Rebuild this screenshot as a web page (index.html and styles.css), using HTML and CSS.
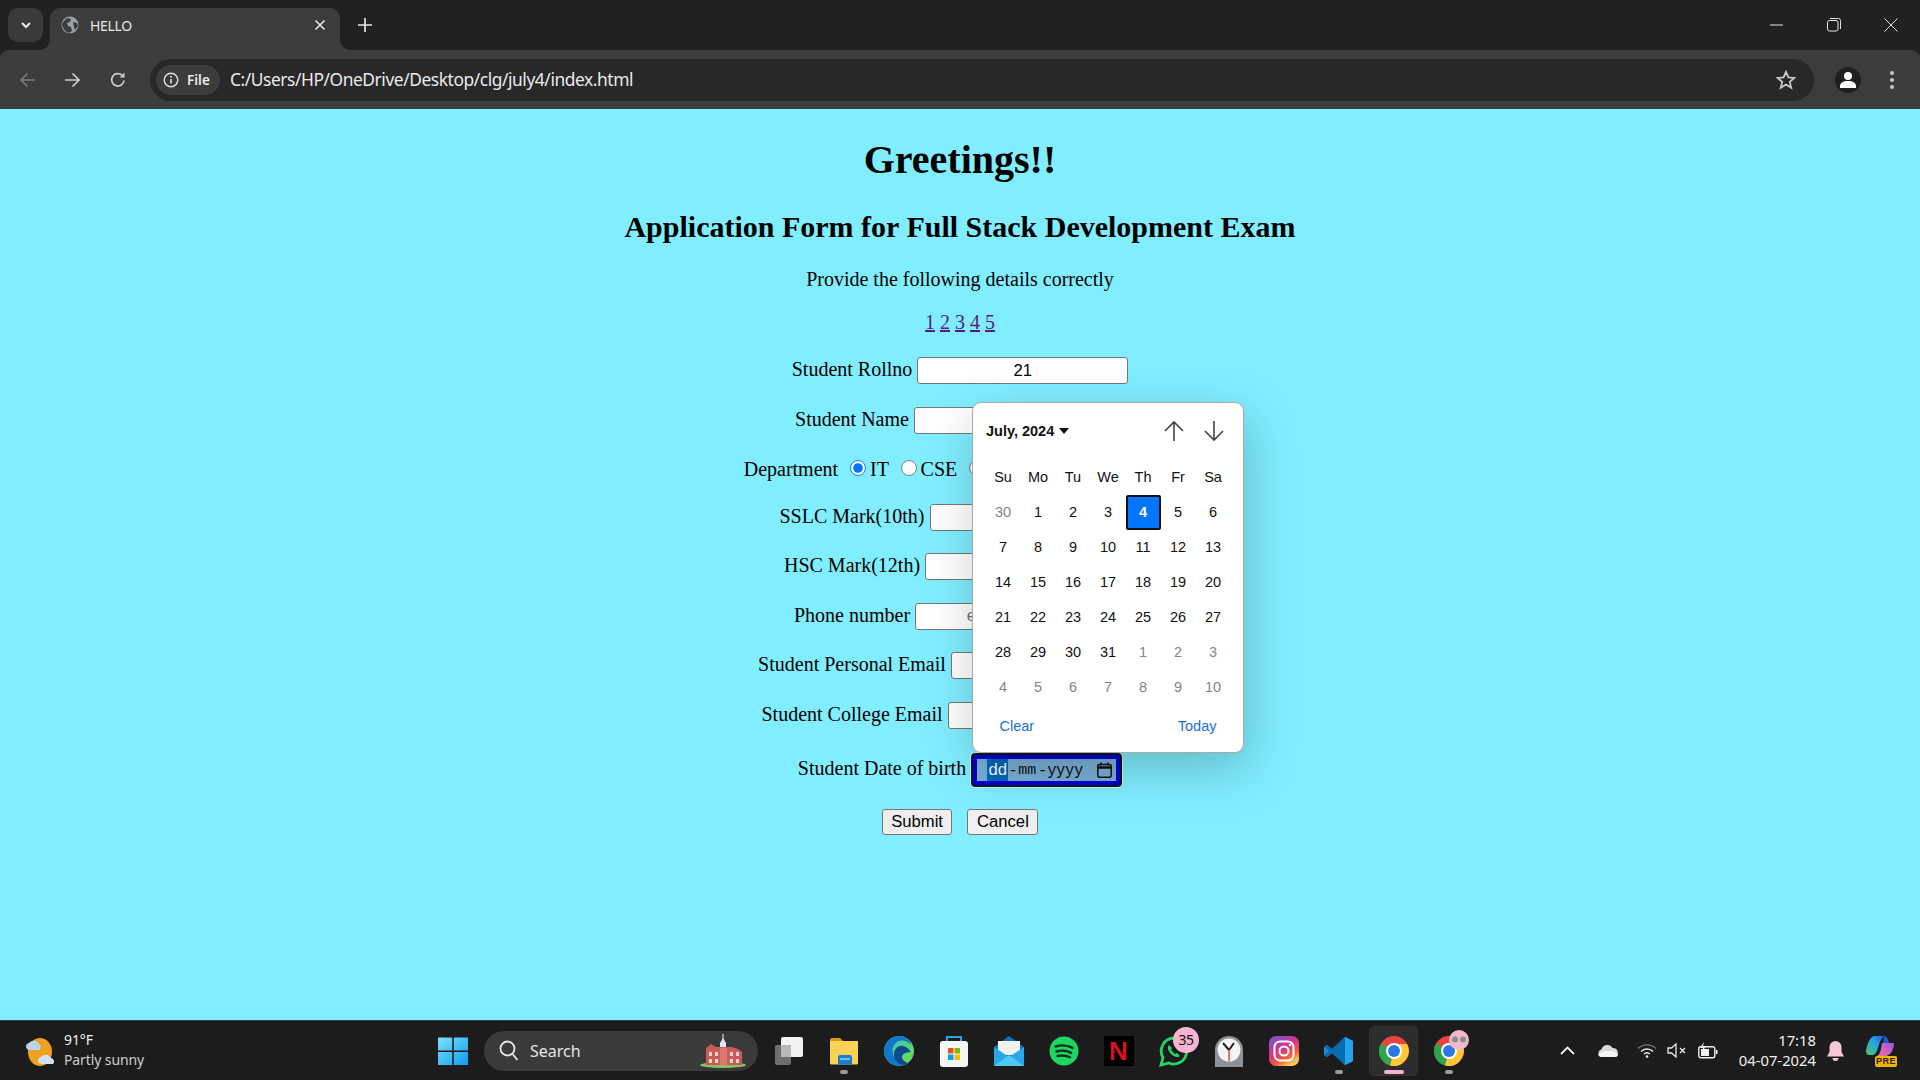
FILE: index.html
```html
<!DOCTYPE html>
<html lang="en">
<head>
<meta charset="utf-8">
<title>HELLO</title>
<link rel="stylesheet" href="styles.css">
</head>
<body>
<div class="tabstrip">
  <div class="tabsearch"><svg width="14" height="14" viewBox="0 0 14 14"><path d="M3 5l4 4 4-4" fill="none" stroke="#e8e8e8" stroke-width="2"/></svg></div>
  <div class="tab">
    <svg class="globe" width="18" height="18" viewBox="0 0 18 18"><circle cx="9" cy="9" r="8.5" fill="#9aa0a6"/><path d="M2 6l4-4 4 1-1 3-3 1 1 3 3 1 1 4-3 2C5 16 2 13 1 9z M12 6l4 1 1 3-3 4-1-3z" fill="#3c3c3c"/></svg>
    <span class="tabtitle">HELLO</span>
    <svg class="tabclose" width="12" height="12" viewBox="0 0 12 12"><path d="M1.5 1.5l9 9M10.5 1.5l-9 9" stroke="#e8e8e8" stroke-width="1.6"/></svg>
  </div>
  <svg class="newtab" width="14" height="14" viewBox="0 0 14 14"><path d="M7 0v14M0 7h14" stroke="#e3e3e3" stroke-width="1.7"/></svg>
  <div class="winctrls">
    <svg width="14" height="14" viewBox="0 0 14 14"><path d="M0 7h13" stroke="#e3e3e3" stroke-width="1"/></svg>
    <svg width="14" height="14" viewBox="0 0 14 14"><rect x=".5" y="2.5" width="10.5" height="10.5" rx="2" fill="none" stroke="#e3e3e3"/><path d="M3 .5h8.5a2 2 0 0 1 2 2V11" fill="none" stroke="#e3e3e3"/></svg>
    <svg width="14" height="14" viewBox="0 0 14 14"><path d="M.5.5l13 13M13.5.5l-13 13" stroke="#e3e3e3" stroke-width="1"/></svg>
  </div>
</div>
<div class="toolbar">
  <svg class="navicon" width="18" height="18" viewBox="0 0 18 18"><path d="M16 9H2M8.500 2.500L2 9l6.500 6.500" fill="none" stroke="#797979" stroke-width="1.7"/></svg>
  <svg class="navicon" width="18" height="18" viewBox="0 0 18 18"><path d="M2 9h14M9.500 2.500L16 9l-6.500 6.500" fill="none" stroke="#d0d0d0" stroke-width="1.7"/></svg>
  <svg class="navicon" width="18" height="18" viewBox="0 0 18 18"><path d="M15 9.500A6.200 6.200 0 1 1 13 4.200" fill="none" stroke="#d0d0d0" stroke-width="1.700"/><path d="M15.500 1.500v5h-5z" fill="#d0d0d0"/></svg>
  <div class="omnibox">
    <div class="chip">
      <svg width="16" height="16" viewBox="0 0 16 16"><circle cx="8" cy="8" r="6.800" fill="none" stroke="#e3e3e3" stroke-width="1.400"/><path d="M8 7v4.500" stroke="#e3e3e3" stroke-width="1.600"/><circle cx="8" cy="4.800" r="1" fill="#e3e3e3"/></svg>
      <span class="chiptext">File</span>
    </div>
    <span class="url">C:/Users/HP/OneDrive/Desktop/clg/july4/index.html</span>
    <svg class="star" width="20" height="20" viewBox="0 0 20 20"><path d="M10 1.800l2.400 5.600 6 .5-4.600 4 1.400 5.900-5.200-3.200-5.200 3.200 1.400-5.900-4.600-4 6-.5z" fill="none" stroke="#c8c8c8" stroke-width="1.800"/></svg>
  </div>
  <div class="avatar"><svg width="20" height="20" viewBox="0 0 20 20"><circle cx="10" cy="6" r="4" fill="#fff"/><path d="M2 18v-2c0-3 3-5 8-5s8 2 8 5v2z" fill="#fff"/></svg></div>
  <svg class="dots" width="6" height="20" viewBox="0 0 6 20"><circle cx="3" cy="3" r="2" fill="#c8c8c8"/><circle cx="3" cy="10" r="2" fill="#c8c8c8"/><circle cx="3" cy="17" r="2" fill="#c8c8c8"/></svg>
</div>

<main class="page">
  <h1>Greetings!!</h1>
  <h2>Application Form for Full Stack Development Exam</h2>
  <p class="line">Provide the following details correctly</p>
  <p class="line"><a href="#a">1</a> <a href="#b">2</a> <a href="#c">3</a> <a href="#d">4</a> <a href="#e">5</a></p>
  <form class="form">
    <p class="row">Student Rollno <input class="field" type="text" value="21"></p>
    <p class="row">Student Name <input class="field" type="text"></p>
    <p class="row deptrow">Department &nbsp;<input class="radio" type="radio" name="d" checked> IT &nbsp;<input class="radio" type="radio" name="d"> CSE &nbsp;<input class="radio" type="radio" name="d"><span class="deptgap"></span></p>
    <p class="row">SSLC Mark(10th) <input class="field" type="text"></p>
    <p class="row">HSC Mark(12th) <input class="field" type="text"></p>
    <p class="row">Phone number <input class="field" type="text" placeholder="enter numbers"></p>
    <p class="row">Student Personal Email <input class="field" type="text"></p>
    <p class="row">Student College Email <input class="field" type="text"></p>
    <p class="row daterow">Student Date of birth <span class="datefield"><span class="dateinner"><span class="dd">dd</span><span class="sep">-</span><span class="mm">mm</span><span class="sep">-</span><span class="yy">yyyy</span><svg class="calicon" width="15" height="16" viewBox="0 0 15 16"><rect x=".8" y="2.500" width="13.400" height="12.700" rx="1.500" fill="none" stroke="#111" stroke-width="1.500"/><path d="M1 5.500h13" stroke="#111" stroke-width="2.500"/><path d="M4 .5v3M11 .5v3" stroke="#111" stroke-width="1.500"/></svg></span></span></p>
    <div class="buttons"><button type="button" class="btn">Submit</button><button type="button" class="btn">Cancel</button></div>
  </form>

  <div class="picker">
    <div class="pickhead">
      <span class="month">July, 2024 <svg width="10" height="6" viewBox="0 0 10 6"><path d="M0 0h10L5 6z" fill="#111"/></svg></span>
      <span class="arrows">
        <svg width="20" height="22" viewBox="0 0 20 22"><path d="M10 21V2M1 11l9-9 9 9" fill="none" stroke="#444" stroke-width="1.600"/></svg>
        <svg width="20" height="22" viewBox="0 0 20 22"><path d="M10 1v19M1 11l9 9 9-9" fill="none" stroke="#444" stroke-width="1.600"/></svg>
      </span>
    </div>
    <div class="grid">
      <span>Su</span><span>Mo</span><span>Tu</span><span>We</span><span>Th</span><span>Fr</span><span>Sa</span>
      <span class="off">30</span><span>1</span><span>2</span><span>3</span><span class="sel">4</span><span>5</span><span>6</span>
      <span>7</span><span>8</span><span>9</span><span>10</span><span>11</span><span>12</span><span>13</span>
      <span>14</span><span>15</span><span>16</span><span>17</span><span>18</span><span>19</span><span>20</span>
      <span>21</span><span>22</span><span>23</span><span>24</span><span>25</span><span>26</span><span>27</span>
      <span>28</span><span>29</span><span>30</span><span>31</span><span class="off">1</span><span class="off">2</span><span class="off">3</span>
      <span class="off">4</span><span class="off">5</span><span class="off">6</span><span class="off">7</span><span class="off">8</span><span class="off">9</span><span class="off">10</span>
    </div>
    <div class="pickfoot"><span>Clear</span><span>Today</span></div>
  </div>
</main>

<footer class="taskbar">
  <div class="weather">
    <svg width="34" height="34" viewBox="0 0 34 34"><ellipse cx="17" cy="18" rx="12" ry="14" fill="#f0a020"/><path d="M3 13a4 4 0 0 1 3-4 6 6 0 0 1 10 1 3.500 3.500 0 0 1 0 6H6a3.500 3.500 0 0 1-3-3z" fill="#b9d4f2"/><path d="M15 27a4 4 0 0 1 3-4 6 6 0 0 1 10 1 3.500 3.500 0 0 1 2 6H18a3.500 3.500 0 0 1-3-3z" fill="#cfe2f7"/></svg>
    <div class="wtext"><div class="temp">91°F</div><div class="cond">Partly sunny</div></div>
  </div>
  <div class="center">
    <svg class="winlogo" width="30" height="30" viewBox="0 0 30 30"><defs><linearGradient id="w" x1="0" y1="0" x2="1" y2="1"><stop offset="0" stop-color="#7de0fb"/><stop offset="1" stop-color="#0f9cf0"/></linearGradient></defs><path d="M0 1.500h14.200v13H0zM15.800 1.500H30v13H15.800zM0 16h14.200v13H0zM15.800 16H30v13H15.800z" fill="url(#w)"/></svg>
    <div class="search">
      <svg width="20" height="22" viewBox="0 0 20 22"><circle cx="8.500" cy="8.500" r="7" fill="none" stroke="#e8e8e8" stroke-width="1.800"/><path d="M13.500 14l5 6" stroke="#e8e8e8" stroke-width="1.800"/></svg>
      <span class="searchtext">Search</span>
      <svg class="building" width="46" height="34" viewBox="0 0 46 34"><ellipse cx="23" cy="31" rx="23" ry="3" fill="#8ec060"/><path d="M22.500 0h1v8h-1z" fill="#e8e8f4"/><path d="M20 9l3-5 3 5v5h-6z" fill="#e4e6f5"/><path d="M6 14l5-4 5 3h16l6 2 4 3v13H6z" fill="#c95a55"/><path d="M20 14h7v17h-7z" fill="#d97a70"/><path d="M9 18h3v4H9zM15 18h3v4h-3zM30 18h3v4h-3zM36 18h3v4h-3zM9 25h3v4H9zM15 25h3v4h-3zM30 25h3v4h-3zM36 25h3v4h-3z" fill="#f1d5d0"/></svg>
    </div>
    <div class="apps">
      <div class="app"><svg width="28" height="30" viewBox="0 0 28 30"><rect x="6" y="1" width="22" height="20" rx="2" fill="#f2f2f2"/><rect x="0" y="9" width="16" height="20" rx="2" fill="#6e6e6e"/><rect x="6" y="9" width="10" height="12" fill="#b8b8b8"/></svg></div>
      <div class="app on"><svg width="32" height="32" viewBox="0 0 32 32"><path d="M2 5a2 2 0 0 1 2-2h8l3 3h-13z" fill="#d99a14"/><path d="M2 6h28v22a1.500 1.500 0 0 1-1.500 1.500h-25A1.500 1.500 0 0 1 2 28z" fill="#fcd256"/><path d="M10 22a2 2 0 0 1 2-2h10a2 2 0 0 1 2 2v7.500H10z" fill="#1b7ecb"/><path d="M12 24h10" stroke="#8fd0f8" stroke-width="1.500"/></svg></div>
      <div class="app"><svg width="32" height="32" viewBox="0 0 32 32"><defs><linearGradient id="e" x1="0" y1="0" x2="1" y2="1"><stop offset="0" stop-color="#2fb8d0"/><stop offset=".7" stop-color="#5fd868"/></linearGradient></defs><circle cx="16" cy="16" r="15" fill="url(#e)"/><path d="M1 16C1 8 8 1 16 1c7 0 11 4 12 9-3-4-9-6-14-3C9 10 8 17 12 23c3 4 8 6 13 5-3 2-6 3-9 3C8 31 1 24 1 16z" fill="#1278cc"/><path d="M11 20c0-6 4-10 9-9 4 1 6 3 8 6-3 0-9 1-9 5 0 3 3 5 6 6-3 2-7 2-10 0-2-2-4-5-4-8z" fill="#0c4a8e"/></svg></div>
      <div class="app"><svg width="30" height="34" viewBox="0 0 30 34"><path d="M8 8V3h14v5" fill="none" stroke="#22a8e8" stroke-width="2"/><rect x="1" y="7" width="28" height="26" rx="3" fill="#f6f6f6"/><rect x="9" y="14" width="5.500" height="5.500" fill="#ef4f24"/><rect x="15.500" y="14" width="5.500" height="5.500" fill="#7fbb00"/><rect x="9" y="20.500" width="5.500" height="5.500" fill="#00a3ee"/><rect x="15.500" y="20.500" width="5.500" height="5.500" fill="#ffb800"/></svg></div>
      <div class="app"><svg width="32" height="32" viewBox="0 0 32 32"><path d="M1 12L16 1l15 11v18a1 1 0 0 1-1 1H2a1 1 0 0 1-1-1z" fill="#0a73c8"/><path d="M5 6h22v14H5z" fill="#f2f2f2"/><path d="M1 12l15 10 15-10v18a1 1 0 0 1-1 1H2a1 1 0 0 1-1-1z" fill="#28a8ea"/><path d="M1 31L16 20l15 11z" fill="#50c8f4"/></svg></div>
      <div class="app"><svg width="30" height="30" viewBox="0 0 30 30"><circle cx="15" cy="15" r="14.500" fill="#1ed760"/><path d="M6.500 10.500c6-1.800 12-1.400 17 1.400M7.500 15.500c5-1.400 10.500-1 14.500 1.400M8.500 20c4.400-1 8.500-.8 12.500 1.200" fill="none" stroke="#14301e" stroke-width="2.400" stroke-linecap="round"/></svg></div>
      <div class="app"><span class="netflix">N</span></div>
      <div class="app"><svg width="32" height="32" viewBox="0 0 32 32"><path d="M16 3a13 13 0 0 0-11 19.500L3 30l7.700-2A13 13 0 1 0 16 3z" fill="none" stroke="#25d366" stroke-width="2.800"/><path d="M11 10c-2 2-1 6 2 9s7 4 9 2l-3-3-2 1-4-4 1-2z" fill="#25d366"/></svg><span class="badge">35</span></div>
      <div class="app"><svg width="30" height="34" viewBox="0 0 30 34"><path d="M21 3l5 4-2 2z" fill="#555"/><path d="M1 16a14 14 0 0 1 28 0v17H1z" fill="#8b9298"/><circle cx="15" cy="16" r="11.500" fill="#f4f4f4"/><path d="M15 16L9 9M15 16l5-7" stroke="#222" stroke-width="2"/><path d="M15 16v11" stroke="#d85030" stroke-width="1.500"/></svg></div>
      <div class="app"><svg width="30" height="30" viewBox="0 0 30 30"><defs><linearGradient id="i" x1="0" y1="0" x2=".6" y2="1"><stop offset="0" stop-color="#6a5ad8"/><stop offset=".5" stop-color="#d8308c"/><stop offset=".8" stop-color="#f0603c"/><stop offset="1" stop-color="#fcc850"/></linearGradient></defs><rect width="30" height="30" rx="7" fill="url(#i)"/><rect x="5.500" y="5.500" width="19" height="19" rx="5.500" fill="none" stroke="#fff" stroke-width="2"/><circle cx="15" cy="15" r="4.500" fill="none" stroke="#fff" stroke-width="2"/><circle cx="21" cy="9" r="1.300" fill="#fff"/></svg></div>
      <div class="app on"><svg width="30" height="30" viewBox="0 0 30 30"><path d="M21 1l8 4v20l-8 4L8 17l-5 4-3-2V11l3-2 5 4zM21 9l-8 6 8 6z" fill="#1c90dc"/><path d="M21 1L8 13l-5-4-3 2 5 4-5 4 3 2 5-4 13 12z" fill="#0a6cb0"/><path d="M21 1l8 4v20l-8 4z" fill="#25a6ec"/></svg></div>
      <div class="app active"><svg width="30" height="30" viewBox="0 0 30 30"><circle cx="15" cy="15" r="15" fill="#e8453c"/><path d="M15 15L2 7.500A15 15 0 0 0 11 29.500z" fill="#2ea44f"/><path d="M15 8h13a15 15 0 0 1-17 21.500L15 15z" fill="#fcc934"/><circle cx="15" cy="15" r="8" fill="#fff"/><circle cx="15" cy="15" r="6" fill="#2a78e4"/></svg></div>
      <div class="app on"><svg width="30" height="30" viewBox="0 0 30 30"><circle cx="15" cy="15" r="15" fill="#e8453c"/><path d="M15 15L2 7.500A15 15 0 0 0 11 29.500z" fill="#2ea44f"/><path d="M15 8h13a15 15 0 0 1-17 21.500L15 15z" fill="#fcc934"/><circle cx="15" cy="15" r="8" fill="#fff"/><circle cx="15" cy="15" r="6" fill="#2a78e4"/></svg><svg class="profilepic" width="20" height="20" viewBox="0 0 20 20"><circle cx="10" cy="10" r="10" fill="#f0b8cc"/><circle cx="6" cy="9.500" r="3" fill="#8a8a90"/><circle cx="14" cy="9.500" r="3" fill="#8a8a90"/></svg></div>
    </div>
  </div>
  <div class="tray">
    <svg width="15" height="9" viewBox="0 0 15 9"><path d="M1 8l6.500-6.500L14 8" fill="none" stroke="#f0f0f0" stroke-width="1.800"/></svg>
    <svg class="tcloud" width="20" height="13" viewBox="0 0 20 13"><path d="M4 13a3.800 3.800 0 0 1-.5-7.500A6 6 0 0 1 14.500 4 4.500 4.500 0 0 1 16 13z" fill="#d8d8d8"/><path d="M0 10.500l6-3.500h10l4 3a3 3 0 0 1-4 3H4a4 4 0 0 1-4-2.500z" fill="#f2f2f2"/></svg>
    <svg class="twifi" width="20" height="15" viewBox="0 0 20 15"><path d="M1 5.500a13 13 0 0 1 18 0" fill="none" stroke="#777" stroke-width="1.400"/><path d="M4 8.500a8.500 8.500 0 0 1 12 0M7 11a4.500 4.500 0 0 1 6 0" fill="none" stroke="#f0f0f0" stroke-width="1.400"/><circle cx="10" cy="13.500" r="1.300" fill="#f0f0f0"/></svg>
    <svg class="tmute" width="20" height="15" viewBox="0 0 20 15"><path d="M1 5h3.500L9 1v13L4.500 10H1z" fill="none" stroke="#e8e8e8" stroke-width="1.300"/><path d="M13 5l5 5M18 5l-5 5" stroke="#e8e8e8" stroke-width="1.300"/></svg>
    <svg class="tbatt" width="20" height="17" viewBox="0 0 20 17"><rect x=".8" y="4.800" width="16" height="11" rx="2" fill="none" stroke="#f0f0f0" stroke-width="1.400"/><rect x="18" y="8" width="1.500" height="4" fill="#f0f0f0"/><rect x="3" y="7" width="8" height="7" fill="#f0f0f0"/><path d="M6 0L2 6h3l-1 4 4-6H5z" fill="#f0f0f0"/></svg>
    <div class="clock"><div>17:18</div><div>04-07-2024</div></div>
    <svg class="bell" width="17" height="20" viewBox="0 0 17 20"><path d="M8.500 0A6 6 0 0 0 2.500 6v5L0 15.500h17L14.500 11V6a6 6 0 0 0-6-6z" fill="#f7c6d8"/><path d="M5.500 17h6a3 3 0 0 1-6 0z" fill="#f7c6d8"/></svg>
    <div class="copilot">
      <svg width="28" height="22" viewBox="0 0 28 22"><defs><linearGradient id="c1" x1="0" y1="1" x2="1" y2="0"><stop offset="0" stop-color="#4cc86a"/><stop offset=".6" stop-color="#20a0e8"/><stop offset="1" stop-color="#1560d8"/></linearGradient><linearGradient id="c2" x1="0" y1="1" x2="1" y2="0"><stop offset="0" stop-color="#f070a0"/><stop offset="1" stop-color="#9858e0"/></linearGradient></defs><path d="M8 0h10c-3 3-5 7-6 12-1 3-2 6-5 7H3c-2 0-3-2-3-4C1 9 3 2 8 0z" fill="url(#c1)"/><path d="M18 0c2 0 3 1 4 4l1 3h-6c1-3 1-5 1-7z" fill="#1560d8"/><path d="M16 7h11c1 0 1 1 1 2-1 5-3 10-8 11h-9c4-2 4-9 5-13z" fill="url(#c2)"/></svg>
      <span class="pre">PRE</span>
    </div>
  </div>
</footer>
</body>
</html>
```

FILE: styles.css
```css
* { box-sizing: border-box; }
html, body { margin: 0; height: 100%; }
body { display: flex; flex-direction: column; height: 100vh; overflow: hidden; background: #202222; }

.tabstrip { height: 50px; flex: none; background: #202222; display: flex; align-items: flex-start; position: relative; font-family: "Noto Sans", sans-serif; }
.tabsearch { width: 35px; height: 34px; margin: 8px 0 0 8px; border-radius: 10px; background: #3a3a3a; display: flex; align-items: center; justify-content: center; }
.tab { position: relative; width: 290px; height: 42px; margin: 8px 0 0 7px; background: #3c3c3c; border-radius: 10px 10px 0 0; display: flex; align-items: center; padding: 0 14px 0 11px; }
.tab::before, .tab::after { content: ""; position: absolute; bottom: 0; width: 10px; height: 10px; }
.tab::before { left: -10px; background: radial-gradient(circle at 0 0, transparent 9.500px, #3c3c3c 10px); }
.tab::after { right: -10px; background: radial-gradient(circle at 100% 0, transparent 9.500px, #3c3c3c 10px); }
.globe { flex: none; margin-top: -8px; }
.tabtitle { color: #e6e6e6; font-size: 14px; margin: -8px 0 0 11px; flex: 1; letter-spacing: -.3px; }
.tabclose { flex: none; margin-top: -8px; }
.newtab { margin: 18px 0 0 18px; flex: none; }
.winctrls { margin-left: auto; margin-top: 18px; padding-right: 22px; display: flex; gap: 43px; }

.toolbar { height: 59px; flex: none; background: #3c3c3c; display: flex; align-items: center; padding-left: 19px; border-radius: 9px 9px 0 0; }
.navicon { flex: none; margin-right: 27px; }
.navicon:nth-of-type(2) { margin-right: 28px; margin-left: -1px; }
.navicon:nth-of-type(3) { margin-right: 23px; }
.omnibox { flex: none; width: 1664px; height: 42px; border-radius: 21px; background: #282828; display: flex; align-items: center; padding: 0 18px 0 6px; }
.chip { width: 64px; height: 30px; border-radius: 15px; background: #3c3c3c; display: flex; align-items: center; padding-left: 7px; gap: 8px; }
.chiptext { font: 600 13.5px "Noto Sans", sans-serif; color: #ececec; }
.url { font: 17.4px "Noto Sans", sans-serif; color: #e8eaed; margin: -2px 0 0 10px; flex: 1; letter-spacing: -.44px; }
.avatar { flex: none; width: 26px; height: 26px; margin-left: 21px; border-radius: 50%; background: #1f1f1f; display: flex; align-items: center; justify-content: center; }
.dots { flex: none; margin-left: 28px; }

.page { flex: 1; min-height: 0; position: relative; background: #80eeff; color: #000; font-family: "Liberation Serif", serif; text-align: center; overflow: hidden; }
h1 { font-size: 40px; margin: 26.800px 0; font-weight: 700; }
h2 { font-size: 30px; margin: 26.800px 0 24.900px; font-weight: 700; }
.line { font-size: 20px; margin: 20px 0; }
.line a { color: #551a8b; }
.form { margin: 0; }
.row { font-size: 20px; margin: 22.600px 0; }
.field { width: 211px; height: 27px; border: 1px solid #767676; border-radius: 3px; background: #fff; font: 16.670px "Liberation Sans", sans-serif; text-align: center; padding: 1px 2px; }
.field::placeholder { color: #757575; }
.radio { width: 16px; height: 16px; margin: 3.750px -1px 0 2px; }
.deptgap { display: inline-block; width: 192px; }
.daterow { margin-top: 24.500px; margin-bottom: 0; }
.datefield { display: inline-block; vertical-align: baseline; width: 151px; height: 34px; background: #0000d4; border: 2px solid #15151f; border-radius: 4px; outline: 1px solid rgba(255,255,255,.5); padding: 4px; font: 16.670px "Liberation Sans", sans-serif; text-align: left; }
.dateinner { display: flex; align-items: center; height: 22px; background: #7ab0d8; padding-left: 10px; color: #111; }
.dd { width: 21px; height: 22px; line-height: 22px; background: #0067b8; color: #fff; text-align: center; }
.sep { width: 5.500px; margin: 0 2.500px 0 2px; }
.mm { font: 15px "Liberation Mono", monospace; margin-right: 1.500px; }
.yy { letter-spacing: .6px; }
.calicon { margin-left: auto; margin-right: 4px; }
.buttons { display: flex; justify-content: center; gap: 15px; margin-top: 22px; }
.btn { font: 16.670px "Liberation Sans", sans-serif; height: 26px; padding: 0 8.500px; border: 1px solid #767676; border-radius: 3px; background: #efefef; color: #000; }

.picker { position: absolute; left: 972px; top: 293px; width: 272px; height: 351px; background: #fff; border: 1px solid #aaa; border-radius: 9px; box-shadow: 4px 16px 50px rgba(0,0,0,.22); padding: 0 12.500px; font-family: "Liberation Sans", sans-serif; color: #111; }
.pickhead { height: 48px; display: flex; align-items: center; justify-content: space-between; margin-top: 4px; padding: 0 7px 0 .5px; }
.month { font-size: 14.500px; font-weight: 700; display: flex; align-items: center; gap: 5px; }
.arrows { display: flex; gap: 20px; }
.grid { display: grid; grid-template-columns: repeat(7, 35px); grid-auto-rows: 35px; margin-top: 4.500px; font-size: 14.500px; }
.grid span { display: flex; align-items: center; justify-content: center; }
.grid .off { color: #858585; }
.grid .sel { background: #0075ff; color: #fff; font-weight: 700; border: 2px solid #111; border-radius: 2px; }
.pickfoot { display: flex; justify-content: space-between; padding: 0 14px 0 14px; margin-top: 13.500px; color: #1a6fd8; font-size: 14.500px; }

.taskbar { height: 60px; flex: none; background: #1c1c1c; border-top: 1px solid #2e3a3c; display: flex; align-items: center; position: relative; font-family: "Noto Sans", sans-serif; color: #f0f0f0; }
.weather { display: flex; align-items: center; gap: 7px; margin-left: 23px; width: 415px; flex: none; }
.wtext { font-size: 14px; line-height: 20px; margin-top: -2px; letter-spacing: -.1px; }
.cond { color: #ccc; }
.center { display: flex; align-items: center; flex: none; }
.winlogo { flex: none; }
.search { width: 274px; height: 40px; margin-left: 16px; border-radius: 20px; background: #3a3a3a; display: flex; align-items: center; padding-left: 15px; gap: 11px; }
.searchtext { font-size: 16px; color: #e4e4e4; flex: 1; }
.building { margin-right: 12px; }
.apps { display: flex; margin-left: 3px; }
.app { width: 55px; height: 50px; display: flex; align-items: center; justify-content: center; position: relative; }
.app.on::after { content: ""; position: absolute; bottom: 2px; left: 50%; width: 8px; height: 4px; margin-left: -4px; border-radius: 2px; background: #9a9a9a; }
.app.active { background: #2d2d2d; border-radius: 5px; width: 49px; margin: 0 3px; border: 1px solid #333; }
.app.active::after { content: ""; position: absolute; bottom: 1px; left: 50%; width: 20px; height: 4px; margin-left: -10px; border-radius: 2px; background: #f4b4d0; }
.netflix { width: 30px; height: 30px; background: #000; color: #d81020; font: 700 26px/30px "Liberation Sans", sans-serif; text-align: center; }
.badge { position: absolute; right: 2px; top: 1px; width: 26px; height: 26px; border-radius: 50%; background: #f9b4d4; color: #111; font-size: 14px; line-height: 26px; text-align: center; letter-spacing: -.5px; }
.profilepic { position: absolute; right: 7px; top: 4px; }
.tray { position: absolute; right: 0; top: 0; bottom: 0; display: flex; align-items: center; }
.tcloud { margin-left: 23px; }
.twifi { margin-left: 19px; }
.tmute { margin-left: 10px; }
.tbatt { margin-left: 11px; }
.clock { margin-left: 21px; margin-top: -1px; text-align: right; font-size: 14.800px; line-height: 20px; color: #f0f0f0; }
.bell { margin-left: 11px; }
.copilot { position: relative; width: 30px; height: 30px; margin: 0 24px 0 22px; }
.pre { position: absolute; right: -1px; bottom: -1px; width: 22px; height: 11px; border-radius: 2px; background: #f4b400; color: #222; font: 700 9px/11px "Liberation Sans", sans-serif; text-align: center; letter-spacing: .5px; }
```
